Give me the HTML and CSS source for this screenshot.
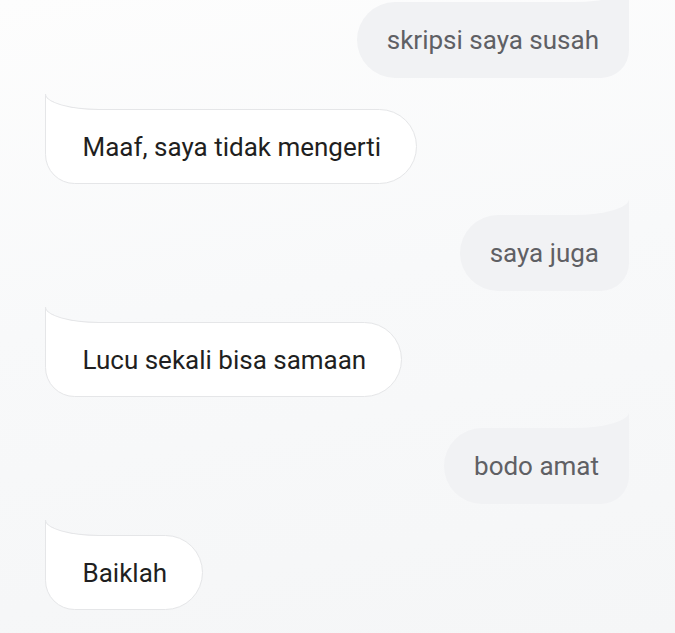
FILE: index.html
```html
<!DOCTYPE html>
<html lang="en">
<head>
    <meta charset="UTF-8">
    <meta name="viewport" content="width=device-width, initial-scale=1.0">
    <title>Chat</title>
    <link rel="stylesheet" href="styles.css">
</head>
<body>
    <div class="chat">
        <div class="msg me">skripsi saya susah</div>
        <div class="msg bot">Maaf, saya tidak mengerti</div>
        <div class="msg me">saya juga</div>
        <div class="msg bot">Lucu sekali bisa samaan</div>
        <div class="msg me">bodo amat</div>
        <div class="msg bot">Baiklah</div>
    </div>
</body>
</html>
```

FILE: styles.css
```css
html, body {
    height: 100%;
}
body {
    margin: 0;
    background: linear-gradient(170deg, #fdfdfd 0%, #f8f9fa 45%, #f5f6f7 100%) fixed;
    font-family: Roboto, "Noto Sans", sans-serif;
    font-size: 26px;
    overflow: hidden;
}
.chat {
    display: flex;
    flex-direction: column;
    gap: 31px;
    padding: 2px 46px 0 45px;
}
.msg {
    position: relative;
    line-height: 28px;
    padding: 24px 30px;
    white-space: nowrap;
}
.msg::before,
.msg::after {
    content: "";
    position: absolute;
    top: -16px;
    width: 54px;
    height: 16px;
    box-sizing: border-box;
}
.msg::after {
    background: linear-gradient(170deg, #fdfdfd 0%, #f8f9fa 45%, #f5f6f7 100%) fixed;
}

/* own messages, right side */
.me {
    align-self: flex-end;
    background-color: #f1f2f4;
    color: #5f6064;
    border-radius: 38px 0 28px 38px;
}
.me::before {
    right: 0;
    background-color: #f1f2f4;
}
.me::after {
    right: 0;
    border-bottom-right-radius: 54px 16px;
}

/* replies, left side */
.bot {
    align-self: flex-start;
    background-color: #fff;
    color: #1f1f21;
    border: 1.5px solid #e5e6e8;
    border-radius: 0 38px 38px 30px;
    padding: 22.5px 35px 22.5px 36.5px;
}
.bot::before {
    left: -1.5px;
    height: 17.5px;
    background-color: #fff;
    border-left: 1.5px solid #e5e6e8;
}
.bot::after {
    left: -1.5px;
    border-left: 1.5px solid #e5e6e8;
    border-bottom: 1.5px solid #e5e6e8;
    border-bottom-left-radius: 54px 16px;
}
```
